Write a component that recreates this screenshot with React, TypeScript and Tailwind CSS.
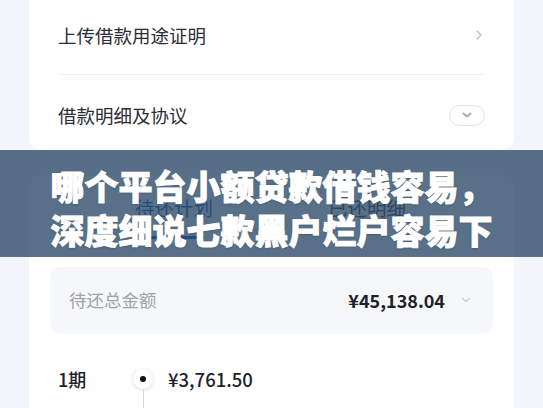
import React from "react";

const font = { fontFamily: '"Noto Sans CJK SC", "Noto Sans", sans-serif' };

export default function App() {
  return (
    <div
      className="relative w-[543px] h-[408px] overflow-hidden bg-[#f3f5fa]"
      style={font}
    >
      <div className="flex flex-col px-[29px]">
        {/* top card */}
        <div className="bg-white rounded-b-[12px] px-[29px]">
          <div className="h-[70px] flex items-center justify-between">
            <span className="text-[18.5px] text-[#2b2e36] leading-none">上传借款用途证明</span>
            <svg width="8" height="12" viewBox="0 0 8 12" className="mr-[2px]">
              <path d="M2 2 L6 6 L2 10" fill="none" stroke="#bfc3cc" strokeWidth="1.6" strokeLinecap="round" strokeLinejoin="round" />
            </svg>
          </div>
          <div className="mt-[4px] h-px bg-[#eceef2]" />
          <div className="h-[75px] pt-[5px] flex items-center justify-between">
            <span className="text-[18.5px] text-[#2b2e36] leading-none">借款明细及协议</span>
            <div className="w-[36px] h-[21px] rounded-full border border-[#e2e4eb] flex items-center justify-center">
              <svg width="12" height="8" viewBox="0 0 12 8">
                <path d="M2.5 2.5 L6 5.5 L9.5 2.5" fill="none" stroke="#a8acba" strokeWidth="2" strokeLinecap="round" strokeLinejoin="round" />
              </svg>
            </div>
          </div>
        </div>

        {/* second card */}
        <div className="mt-[25px] bg-white rounded-t-[12px] px-[21px] pt-[20px]">
          <div className="flex justify-center gap-[115px] pr-[2px]">
            <div className="flex flex-col items-center">
              <span className="text-[19.5px] leading-[26px] text-[#0f3fbf]">待还计划</span>
              <div className="mt-[15px] w-[60px] h-[3px] rounded-full bg-[#0f3fbf]" />
            </div>
            <div className="flex flex-col items-center">
              <span className="text-[19.5px] leading-[26px] text-[#2a2d33]">已还明细</span>
            </div>
          </div>

          <div className="mt-[28px] h-[67px] rounded-[10px] bg-[#f6f7f9] flex items-center justify-between pl-[19px] pr-[22px]">
            <span className="text-[17.5px] text-[#a0a3aa]">待还总金额</span>
            <div className="flex items-center gap-[16px]">
              <span className="text-[18px] font-semibold text-[#1e2128]">¥45,138.04</span>
              <svg width="10" height="7" viewBox="0 0 10 7">
                <path d="M1.5 1.5 L5 4.5 L8.5 1.5" fill="none" stroke="#cdd0d7" strokeWidth="1.4" strokeLinecap="round" strokeLinejoin="round" />
              </svg>
            </div>
          </div>

          <div className="mt-[32px] flex pl-[8px]">
            <div className="w-[75px] flex flex-col">
              <span className="text-[18px] leading-[26px] font-medium text-[#1e2128]">1期</span>
              <span className="mt-[12px] text-[13px] text-[#a0a3aa]">2024/03/20</span>
            </div>
            <div className="w-[20px] flex flex-col items-center">
              <div className="mt-[3px] w-[20px] h-[20px] rounded-full bg-white shadow-[0_1px_4px_rgba(0,0,0,0.15)] flex items-center justify-center">
                <div className="w-[6px] h-[6px] rounded-full bg-[#111]" />
              </div>
              <div className="w-px h-[40px] bg-[#d5d9e0]" />
            </div>
            <div className="ml-[15px] flex flex-col">
              <span className="text-[18.5px] leading-[26px] font-medium text-[#1e2128]">¥3,761.50</span>
              <span className="mt-[12px] text-[13px] text-[#a0a3aa]">本金 ¥3,372.61　利息 ¥388.89</span>
            </div>
          </div>
        </div>
      </div>

      {/* overlay banner */}
      <div className="absolute left-0 top-[150px] w-full h-[107px] bg-[rgba(46,76,106,0.8)] flex flex-col items-center justify-center pt-[9px]">
        <div className="text-[34px] leading-[44px] font-black text-white text-center [-webkit-text-stroke:0.9px_white] [text-shadow:0_1px_2px_rgba(0,0,0,0.25)] whitespace-nowrap">
          哪个平台小额贷款借钱容易，
        </div>
        <div className="text-[34px] leading-[44px] font-black text-white text-center [-webkit-text-stroke:0.9px_white] [text-shadow:0_1px_2px_rgba(0,0,0,0.25)] whitespace-nowrap">
          深度细说七款黑户烂户容易下
        </div>
      </div>
    </div>
  );
}
